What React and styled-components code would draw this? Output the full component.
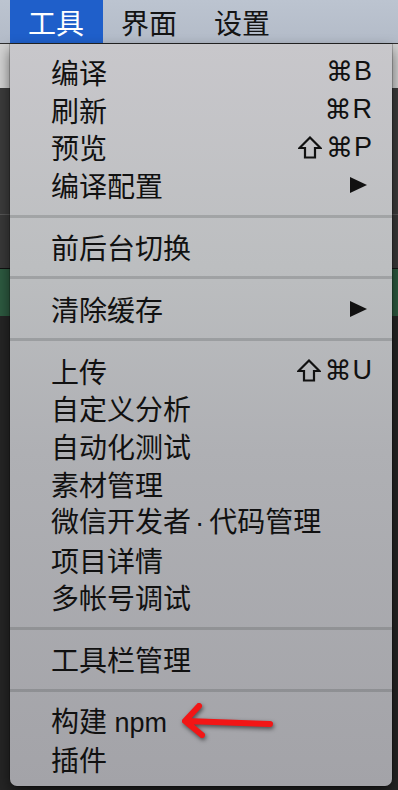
import React from "react";
import styled, { createGlobalStyle } from "styled-components";

const Global = createGlobalStyle`
  html, body { margin: 0; padding: 0; }
  body {
    width: 398px; height: 790px; overflow: hidden;
    background: #262626;
    font-family: "Noto Sans CJK SC", "Noto Sans", sans-serif;
  }
`;

const Screen = styled.div`
  position: relative;
  width: 398px;
  height: 790px;
  display: flex;
  flex-direction: column;
  overflow: hidden;
`;

const MenuBar = styled.div`
  height: 43px;
  flex: 0 0 43px;
  display: flex;
  align-items: stretch;
  padding-left: 10px;
  background: linear-gradient(#bcc4d0, #b3bbc8);
  border-bottom: 1px solid #2e2e2e;
`;

const MenuTitle = styled.div`
  display: flex;
  align-items: center;
  padding: 0 19px 0 18px;
  font-size: 28px;
  line-height: 1;
  color: ${(p) => (p.$active ? "#ffffff" : "#141414")};
  background: ${(p) => (p.$active ? "#1f5fca" : "transparent")};
`;

const Band = styled.div`
  flex: 0 0 ${(p) => p.$h}px;
  background: ${(p) => p.$bg};
  border-bottom: ${(p) => (p.$line ? `1px solid ${p.$line}` : "none")};
`;

const Dropdown = styled.div`
  position: absolute;
  top: 44px;
  left: 10px;
  width: 382px;
  box-sizing: border-box;
  padding: 9px 0 8px;
  display: flex;
  flex-direction: column;
  background: linear-gradient(#c8c7cb 0%, #bcbec0 30%, #afb0b4 55%, #a3a3a8 100%);
  border-radius: 0 0 7px 7px;
  box-shadow: 0 6px 14px rgba(0, 0, 0, 0.55), 0 0 0 0.5px rgba(0, 0, 0, 0.4);
`;

const Item = styled.div`
  height: 37.8px;
  flex: 0 0 37.8px;
  display: flex;
  align-items: center;
  justify-content: space-between;
  padding: 0 20px 0 41px;
  font-size: 28px;
  line-height: 1;
  color: #111;
  white-space: nowrap;
`;

const Label = styled.span`
  font-family: "Noto Sans CJK SC", "Liberation Sans", sans-serif;
`;

const Latin = styled.span`
  font-family: "Liberation Sans", "Noto Sans", sans-serif;
  font-size: 27px;
`;

const Dot = styled.span`
  font-family: "Liberation Sans", sans-serif;
  margin: 0 5px 0 4px;
`;

const Shortcut = styled.span`
  display: flex;
  align-items: center;
  font-family: "Liberation Sans", "DejaVu Sans", sans-serif;
  font-size: 27px;
`;

const Cmd = styled.span`
  font-family: "DejaVu Sans", sans-serif;
  font-size: 27px;
  margin-right: 1px;
`;

const ShiftIcon = styled.svg`
  display: block;
  margin-right: 4px;
`;

const Arrow = styled.span`
  width: 0;
  height: 0;
  margin-right: 5px;
  border-top: 8.5px solid transparent;
  border-bottom: 8.5px solid transparent;
  border-left: 17px solid #111;
`;

const Separator = styled.div`
  flex: 0 0 24px;
  height: 24px;
  display: flex;
  align-items: center;
  &::before {
    content: "";
    display: block;
    width: 100%;
    height: 3px;
    background: rgba(60, 62, 66, 0.22);
  }
`;

const Annotation = styled.svg`
  position: absolute;
  left: 175px;
  top: 700px;
  overflow: visible;
  filter: drop-shadow(1px 2px 2px rgba(0, 0, 0, 0.55));
`;

const Shift = () => (
  <ShiftIcon width="24" height="23" viewBox="0 0 24 23">
    <path
      d="M12 1.5 L22.5 12 L17 12 L17 21.5 L7 21.5 L7 12 L1.5 12 Z"
      fill="none"
      stroke="#111"
      strokeWidth="2.2"
      strokeLinejoin="miter"
    />
  </ShiftIcon>
);

const items = [
  { t: "编译", k: "B" },
  { t: "刷新", k: "R" },
  { t: "预览", k: "P", shift: true },
  { t: "编译配置", sub: true },
  "sep",
  { t: "前后台切换" },
  "sep",
  { t: "清除缓存", sub: true },
  "sep",
  { t: "上传", k: "U", shift: true },
  { t: "自定义分析" },
  { t: "自动化测试" },
  { t: "素材管理" },
  { t: "微信开发者", dot: "代码管理" },
  { t: "项目详情" },
  { t: "多帐号调试" },
  "sep",
  { t: "工具栏管理" },
  "sep",
  { t: "构建", latin: " npm" },
  { t: "插件" },
];

export default function App() {
  return (
    <Screen>
      <Global />
      <MenuBar>
        <MenuTitle $active>工具</MenuTitle>
        <MenuTitle>界面</MenuTitle>
        <MenuTitle>设置</MenuTitle>
      </MenuBar>
      <Band $h={44} $bg="#d2d2d2" />
      <Band $h={126} $bg="#3c3c3c" $line="#565656" />
      <Band $h={53} $bg="#393939" $line="#111" />
      <Band $h={47} $bg="#2d5a40" />
      <Band $h={476} $bg="#252525" />
      <Dropdown>
        {items.map((it, i) =>
          it === "sep" ? (
            <Separator key={i} />
          ) : (
            <Item key={i}>
              <Label>
                {it.t}
                {it.dot && (
                  <>
                    <Dot>·</Dot>
                    {it.dot}
                  </>
                )}
                {it.latin && <Latin>{it.latin}</Latin>}
              </Label>
              {it.k && (
                <Shortcut>
                  {it.shift && <Shift />}
                  <Cmd>⌘</Cmd>
                  <span>{it.k}</span>
                </Shortcut>
              )}
              {it.sub && <Arrow />}
            </Item>
          )
        )}
      </Dropdown>
      <Annotation width="100" height="45" viewBox="175 700 100 45">
        <path
          d="M270 724 L186 721 M199 706 L185 721 L202 735"
          fill="none"
          stroke="#f21616"
          strokeWidth="6"
          strokeLinecap="round"
          strokeLinejoin="round"
        />
      </Annotation>
    </Screen>
  );
}
